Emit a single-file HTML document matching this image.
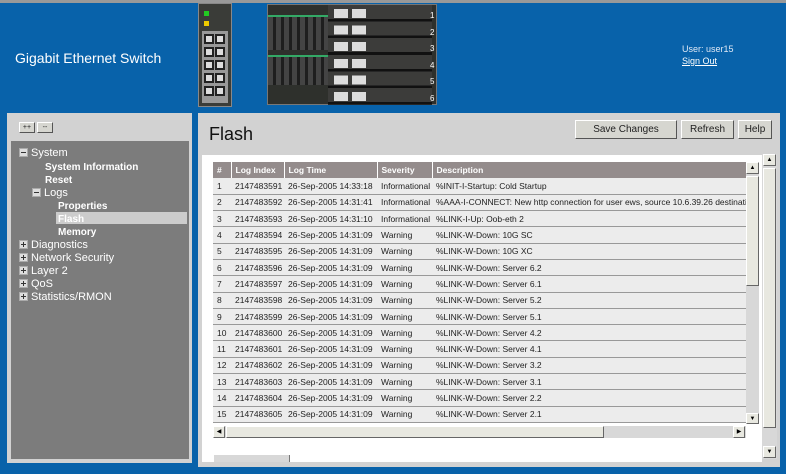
<!DOCTYPE html>
<html><head><style>
*{margin:0;padding:0;box-sizing:border-box}
body{width:786px;height:474px;background:#0862aa;font-family:"Liberation Sans",sans-serif;position:relative;overflow:hidden}
.a{position:absolute}
.btn{position:absolute;background:#d6d6d0;border:1px solid;border-color:#fff #555 #555 #fff;font-size:10px;text-align:center;line-height:17px;color:#222}
.tree div{position:absolute;color:#fff;font-size:11px;white-space:nowrap}
.tree b{font-size:10px}
.pm{display:inline-block;width:9px;height:9px;background:#ddd;border:1px solid #aaa;margin-right:3px;vertical-align:-1px;position:relative}
.pm:after{content:"";position:absolute;left:1px;top:3px;width:5px;height:1px;background:#333}
.pl:before{content:"";position:absolute;left:3px;top:1px;width:1px;height:5px;background:#333}
table{border-collapse:collapse;font-size:8.5px;color:#222}
td{height:16.3px;border-bottom:1px solid #999;padding-left:4px;white-space:nowrap;background:#ececec}
th{background:#948c8c;color:#fff;text-align:left;font-size:8.5px;height:16px;padding-left:4px;border-left:1px solid #fff}
.sb{position:absolute;background:#e8e8e0;border:1px solid;border-color:#fff #666 #666 #fff;font-size:6px;text-align:center;line-height:10px}
.port{position:absolute;width:10px;height:10px;background:#ddd;border:2px solid #222}
</style></head><body>
<div class="a" style="left:0;top:0;width:786px;height:3px;background:#999"></div>
<div class="a" style="left:15px;top:50px;color:#fff;font-size:14px">Gigabit Ethernet Switch</div>
<div class="a" style="left:682px;top:44px;color:#dfe8f5;font-size:9px">User: user15</div>
<div class="a" style="left:682px;top:56px;color:#fff;font-size:9px;text-decoration:underline">Sign Out</div>
<!-- left device -->
<div class="a" style="left:198px;top:3px;width:34px;height:104px;background:#3a3c38;border:1px solid #888">
 <div class="a" style="left:5px;top:7px;width:5px;height:5px;background:#2c2"></div>
 <div class="a" style="left:5px;top:17px;width:5px;height:5px;background:#ec0"></div>
 <div class="a" style="left:3px;top:27px;width:26px;height:72px;background:#999"></div>
 <div class="port" style="left:5px;top:30px"></div><div class="port" style="left:16px;top:30px"></div>
 <div class="port" style="left:5px;top:43px"></div><div class="port" style="left:16px;top:43px"></div>
 <div class="port" style="left:5px;top:56px"></div><div class="port" style="left:16px;top:56px"></div>
 <div class="port" style="left:5px;top:69px"></div><div class="port" style="left:16px;top:69px"></div>
 <div class="port" style="left:5px;top:82px"></div><div class="port" style="left:16px;top:82px"></div>
</div>
<!-- right chassis -->
<div class="a" style="left:267px;top:4px;width:170px;height:101px;background:#2e302c;border:1px solid #777">
 <div class="a" style="left:0;top:10px;width:60px;height:35px;background:repeating-linear-gradient(90deg,#444 0 5px,#1e1e1e 5px 8px);border-top:2px solid #3a6"></div>
 <div class="a" style="left:0;top:50px;width:60px;height:30px;background:repeating-linear-gradient(90deg,#444 0 5px,#1e1e1e 5px 8px);border-top:2px solid #3a6"></div>
 <div class="a" style="left:60px;top:0;width:104px;height:100px;background:repeating-linear-gradient(#3c3c3a 0 14px,#111 14px 16.6px)"></div>
 <div class="a" style="left:66px;top:4px;width:14px;height:95px;background:repeating-linear-gradient(#ddd 0 9px,transparent 9px 16.6px)"></div>
 <div class="a" style="left:84px;top:4px;width:14px;height:95px;background:repeating-linear-gradient(#ddd 0 9px,transparent 9px 16.6px)"></div>
</div>
<div class="a" style="left:430px;top:8px;color:#fff;font-size:8px;line-height:16.6px">1<br>2<br>3<br>4<br>5<br>6</div>
<!-- left panel -->
<div class="a" style="left:7px;top:113px;width:185px;height:350px;background:#d2d2d2"></div>
<div class="btn" style="left:19px;top:122px;width:16px;height:11px;font-size:7px;line-height:9px">++</div>
<div class="btn" style="left:37px;top:122px;width:16px;height:11px;font-size:7px;line-height:9px">--</div>
<div class="a tree" style="left:11px;top:141px;width:178px;height:318px;background:#7c7c7c">
 <div class="a" style="left:45px;top:71px;width:131px;height:12px;background:#ccc"></div>
 <div style="left:8px;top:6px"><span class="pm"></span>System</div>
 <div style="left:34px;top:20px"><b>System Information</b></div>
 <div style="left:34px;top:33px"><b>Reset</b></div>
 <div style="left:21px;top:46px"><span class="pm"></span>Logs</div>
 <div style="left:47px;top:59px"><b>Properties</b></div>
 <div style="left:47px;top:72px"><b>Flash</b></div>
 <div style="left:47px;top:85px"><b>Memory</b></div>
 <div style="left:8px;top:98px"><span class="pm pl"></span>Diagnostics</div>
 <div style="left:8px;top:111px"><span class="pm pl"></span>Network Security</div>
 <div style="left:8px;top:124px"><span class="pm pl"></span>Layer 2</div>
 <div style="left:8px;top:137px"><span class="pm pl"></span>QoS</div>
 <div style="left:8px;top:150px"><span class="pm pl"></span>Statistics/RMON</div>
</div>
<!-- right panel -->
<div class="a" style="left:198px;top:113px;width:582px;height:354px;background:#d2d2d2"></div>
<div class="a" style="left:209px;top:124px;font-size:18px;color:#111">Flash</div>
<div class="btn" style="left:575px;top:120px;width:102px;height:19px">Save Changes</div>
<div class="btn" style="left:681px;top:120px;width:53px;height:19px">Refresh</div>
<div class="btn" style="left:738px;top:120px;width:34px;height:19px">Help</div>
<div class="a" style="left:202px;top:155px;width:560px;height:307px;background:#fff"></div>
<div class="a" style="left:214px;top:455px;width:76px;height:7px;background:#d8d8d8;border-right:1px solid #777"></div>
<div class="a" style="left:762px;top:154px;width:15px;height:305px;background:#d8d8d8"></div>
<div class="sb" style="left:763px;top:154px;width:13px;height:12px">▲</div>
<div class="sb" style="left:763px;top:168px;width:13px;height:260px"></div>
<div class="sb" style="left:763px;top:446px;width:13px;height:12px">▼</div>
<div class="a" style="left:213px;top:162px;width:533px;height:262px;overflow:hidden">
<table style="width:560px">
<tr><th style="width:18px;border-left:0">#</th><th style="width:53px">Log Index</th><th style="width:93px">Log Time</th><th style="width:55px">Severity</th><th>Description</th></tr>
<tr><td>1</td><td>2147483591</td><td>26-Sep-2005 14:33:18</td><td>Informational</td><td>%INIT-I-Startup: Cold Startup</td></tr>
<tr><td>2</td><td>2147483592</td><td>26-Sep-2005 14:31:41</td><td>Informational</td><td>%AAA-I-CONNECT: New http connection for user ews, source 10.6.39.26 destination</td></tr>
<tr><td>3</td><td>2147483593</td><td>26-Sep-2005 14:31:10</td><td>Informational</td><td>%LINK-I-Up: Oob-eth 2</td></tr>
<tr><td>4</td><td>2147483594</td><td>26-Sep-2005 14:31:09</td><td>Warning</td><td>%LINK-W-Down: 10G SC</td></tr>
<tr><td>5</td><td>2147483595</td><td>26-Sep-2005 14:31:09</td><td>Warning</td><td>%LINK-W-Down: 10G XC</td></tr>
<tr><td>6</td><td>2147483596</td><td>26-Sep-2005 14:31:09</td><td>Warning</td><td>%LINK-W-Down: Server 6.2</td></tr>
<tr><td>7</td><td>2147483597</td><td>26-Sep-2005 14:31:09</td><td>Warning</td><td>%LINK-W-Down: Server 6.1</td></tr>
<tr><td>8</td><td>2147483598</td><td>26-Sep-2005 14:31:09</td><td>Warning</td><td>%LINK-W-Down: Server 5.2</td></tr>
<tr><td>9</td><td>2147483599</td><td>26-Sep-2005 14:31:09</td><td>Warning</td><td>%LINK-W-Down: Server 5.1</td></tr>
<tr><td>10</td><td>2147483600</td><td>26-Sep-2005 14:31:09</td><td>Warning</td><td>%LINK-W-Down: Server 4.2</td></tr>
<tr><td>11</td><td>2147483601</td><td>26-Sep-2005 14:31:09</td><td>Warning</td><td>%LINK-W-Down: Server 4.1</td></tr>
<tr><td>12</td><td>2147483602</td><td>26-Sep-2005 14:31:09</td><td>Warning</td><td>%LINK-W-Down: Server 3.2</td></tr>
<tr><td>13</td><td>2147483603</td><td>26-Sep-2005 14:31:09</td><td>Warning</td><td>%LINK-W-Down: Server 3.1</td></tr>
<tr><td>14</td><td>2147483604</td><td>26-Sep-2005 14:31:09</td><td>Warning</td><td>%LINK-W-Down: Server 2.2</td></tr>
<tr><td>15</td><td>2147483605</td><td>26-Sep-2005 14:31:09</td><td>Warning</td><td>%LINK-W-Down: Server 2.1</td></tr>
</table></div>
<div class="a" style="left:746px;top:162px;width:13px;height:262px;background:#d8d8d8"></div>
<div class="sb" style="left:746px;top:162px;width:13px;height:12px">▲</div>
<div class="sb" style="left:746px;top:176px;width:13px;height:110px"></div>
<div class="sb" style="left:746px;top:413px;width:13px;height:11px">▼</div>
<div class="a" style="left:213px;top:426px;width:533px;height:12px;background:#d8d8d8"></div>
<div class="sb" style="left:213px;top:426px;width:12px;height:12px">◀</div>
<div class="sb" style="left:226px;top:426px;width:378px;height:12px"></div>
<div class="sb" style="left:733px;top:426px;width:12px;height:12px">▶</div>
</body></html>
